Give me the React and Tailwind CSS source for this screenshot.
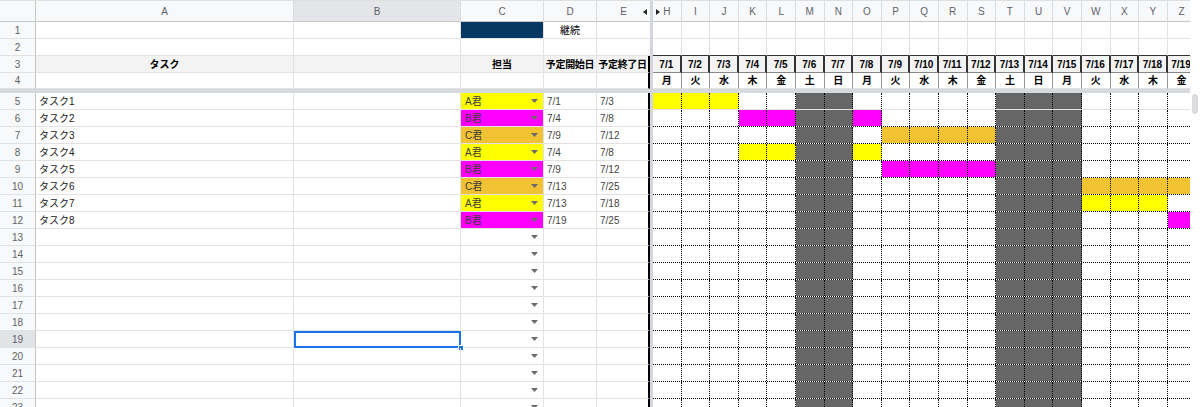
import React from 'react';

const DAYS = Array.from({ length: 19 }, (_, i) => i + 1);
const LETTERS = 'HIJKLMNOPQRSTUVWXYZ'.split('');
const DOW = ['月', '火', '水', '木', '金', '土', '日'];
const HOLIDAYS = [6, 7, 13, 14, 15];

const FILL = {
  A: 'bg-[#ffff00]',
  B: 'bg-[#ff00ff]',
  C: 'bg-[#f1c232]',
};

const tasks = [
  { name: 'タスク1', who: 'A', start: 1, end: 3 },
  { name: 'タスク2', who: 'B', start: 4, end: 8 },
  { name: 'タスク3', who: 'C', start: 9, end: 12 },
  { name: 'タスク4', who: 'A', start: 4, end: 8 },
  { name: 'タスク5', who: 'B', start: 9, end: 12 },
  { name: 'タスク6', who: 'C', start: 13, end: 25 },
  { name: 'タスク7', who: 'A', start: 13, end: 18 },
  { name: 'タスク8', who: 'B', start: 19, end: 25 },
];

const rowNumClass =
  'w-[36px] shrink-0 flex items-center justify-center border-r border-b border-r-[#c4c7c5] border-b-[#e2e2e2] text-[10px] text-[#5f6368]';
const cell = 'shrink-0 flex items-center border-r border-b border-[#e2e2e2]';

const Caret = () => (
  <svg width="7" height="4" viewBox="0 0 7 4" className="shrink-0">
    <path d="M0 0h7L3.5 4z" fill="#6b6b6b" />
  </svg>
);

const HeaderRow = () => (
  <div className="flex h-[21px] bg-[#f8f9fa] text-[10px] text-[#5f6368]">
    <div className="w-[36px] shrink-0 border-r border-b border-r-[#c4c7c5] border-b-[#c4c7c5]" />
    <div className="w-[258px] shrink-0 flex items-center justify-center border-r border-b border-r-[#dadce0] border-b-[#c4c7c5]">A</div>
    <div className="w-[167px] shrink-0 flex items-center justify-center border-r border-b border-r-[#dadce0] border-b-[#c4c7c5] bg-[#e3e5e8]">B</div>
    <div className="w-[83px] shrink-0 flex items-center justify-center border-r border-b border-r-[#dadce0] border-b-[#c4c7c5]">C</div>
    <div className="w-[53px] shrink-0 flex items-center justify-center border-r border-b border-r-[#dadce0] border-b-[#c4c7c5]">D</div>
    <div className="relative w-[53px] shrink-0 flex items-center justify-center border-b border-b-[#c4c7c5]">
      E
      <svg width="4" height="6" viewBox="0 0 4 6" className="absolute right-[3px] top-[8px]">
        <path d="M4 0v6L0 3z" fill="#222" />
      </svg>
    </div>
    <div className="w-[3px] shrink-0 bg-[#d3d6db]" />
    {LETTERS.map((l, i) => (
      <div
        key={l}
        className="relative w-[28.6px] shrink-0 flex items-center justify-center border-r border-b border-r-[#dadce0] border-b-[#c4c7c5]"
      >
        {i === 0 && (
          <svg width="4" height="6" viewBox="0 0 4 6" className="absolute left-[3px] top-[8px]">
            <path d="M0 0v6L4 3z" fill="#222" />
          </svg>
        )}
        {l}
      </div>
    ))}
  </div>
);

const TopRow = ({ num, height, children, gantt }) => (
  <div className={`flex ${height}`}>
    <div className={`${rowNumClass} bg-[#f8f9fa]`}>{num}</div>
    {children}
    <div className="w-[3px] shrink-0 bg-[#d3d6db]" />
    {DAYS.map((d) => gantt(d))}
  </div>
);

const DataRow = ({ row, task }) => {
  const selected = row === 19;
  return (
    <div className="flex h-[17px]">
      <div className={`${rowNumClass} ${selected ? 'bg-[#e1e3e6]' : 'bg-[#f8f9fa]'}`}>{row}</div>
      <div className={`${cell} w-[258px] px-[3px] text-[#222]`}>{task?.name}</div>
      <div className={`${cell} relative w-[167px]`}>
        {selected && (
          <>
            <div className="absolute left-0 top-0 right-[-1px] bottom-[-1px] border-2 border-[#1a73e8]" />
            <div className="absolute right-[-4px] bottom-[-4px] w-[6px] h-[6px] bg-[#1a73e8] border border-white" />
          </>
        )}
      </div>
      <div
        className={`${cell} w-[83px] justify-between pl-[4px] pr-[5px] text-[#3c3c3c] ${task ? FILL[task.who] : ''}`}
      >
        <span>{task ? `${task.who}君` : ''}</span>
        <Caret />
      </div>
      <div className={`${cell} w-[53px] px-[3px] text-[#444]`}>{task ? `7/${task.start}` : ''}</div>
      <div className="w-[53px] shrink-0 flex items-center px-[3px] border-r-2 border-b border-r-black border-b-[#e2e2e2] text-[#444]">
        {task ? `7/${task.end}` : ''}
      </div>
      <div className="w-[3px] shrink-0 bg-[#d3d6db]" />
      <div
        className={`flex shrink-0 border-b ${row === 5 ? 'border-[#e2e2e2]' : 'border-dotted border-black'}`}
      >
        {DAYS.map((d) => {
          const holiday = HOLIDAYS.includes(d);
          const on = task && d >= task.start && d <= task.end;
          const bg = holiday ? 'bg-[#666666]' : on ? FILL[task.who] : '';
          return <div key={d} className={`w-[28.6px] shrink-0 border-r border-dotted border-black ${bg}`} />;
        })}
      </div>
    </div>
  );
};

export default function App() {
  const rows = Array.from({ length: 19 }, (_, i) => i + 5);

  return (
    <div className="relative w-[1200px] h-[407px] overflow-hidden bg-white font-['Liberation_Sans','Noto_Sans_CJK_JP',sans-serif] text-[10px] text-[#222]">
      <div className="flex w-max flex-col border-t border-[#e0e0e0]">
        <HeaderRow />

        {/* row 1 */}
        <TopRow
          num={1}
          height="h-[17px]"
          gantt={(d) => <div key={d} className={`${cell} w-[28.6px]`} />}
        >
          <div className={`${cell} w-[258px]`} />
          <div className={`${cell} w-[167px]`} />
          <div className={`${cell} w-[83px] bg-[#073763]`} />
          <div className={`${cell} w-[53px] justify-center text-black`}>継続</div>
          <div className="w-[53px] shrink-0 border-b border-[#e2e2e2]" />
        </TopRow>

        {/* row 2 */}
        <TopRow
          num={2}
          height="h-[17px]"
          gantt={(d) => (
            <div key={d} className="w-[28.6px] shrink-0 border-r border-b border-r-[#e2e2e2] border-b-[#333]" />
          )}
        >
          <div className={`${cell} w-[258px]`} />
          <div className={`${cell} w-[167px]`} />
          <div className={`${cell} w-[83px]`} />
          <div className={`${cell} w-[53px]`} />
          <div className="w-[53px] shrink-0 border-b border-[#e2e2e2]" />
        </TopRow>

        {/* row 3: headings and dates */}
        <TopRow
          num={3}
          height="h-[17px]"
          gantt={(d) => (
            <div
              key={d}
              className="w-[28.6px] shrink-0 flex items-center justify-center bg-[#f3f3f3] border-r-2 border-b border-r-[#333] border-b-[#888] font-bold text-black"
            >
              7/{d}
            </div>
          )}
        >
          <div className={`${cell} w-[258px] justify-center bg-[#f3f3f3] font-bold text-black`}>タスク</div>
          <div className={`${cell} w-[167px] bg-[#f3f3f3]`} />
          <div className={`${cell} w-[83px] justify-center bg-[#f3f3f3] font-bold text-black`}>担当</div>
          <div className={`${cell} w-[53px] justify-center bg-[#f3f3f3] font-bold text-black tracking-[-0.3px]`}>予定開始日</div>
          <div className="w-[53px] shrink-0 flex items-center justify-center bg-[#f3f3f3] border-r-2 border-b border-r-black border-b-[#e2e2e2] font-bold text-black tracking-[-0.3px]">
            予定終了日
          </div>
        </TopRow>

        {/* row 4: day of week */}
        <TopRow
          num={4}
          height="h-[16px]"
          gantt={(d) => (
            <div
              key={d}
              className="w-[28.6px] shrink-0 flex items-center justify-center border-r border-b border-r-[#999] border-b-[#e2e2e2] font-bold text-black"
            >
              {DOW[(d - 1) % 7]}
            </div>
          )}
        >
          <div className={`${cell} w-[258px]`} />
          <div className={`${cell} w-[167px]`} />
          <div className={`${cell} w-[83px]`} />
          <div className={`${cell} w-[53px]`} />
          <div className="w-[53px] shrink-0 border-r-2 border-b border-r-black border-b-[#e2e2e2]" />
        </TopRow>

        {/* frozen rows divider */}
        <div className="h-[4px] bg-[#d6d9de]" />

        {rows.map((r) => (
          <DataRow key={r} row={r} task={tasks[r - 5]} />
        ))}
      </div>

      {/* vertical scrollbar */}
      <div className="absolute top-0 right-0 h-full w-[10px] bg-white">
        <div className="absolute top-[94px] right-[2px] h-[20px] w-[6px] rounded-full bg-[#dadce0]" />
      </div>
    </div>
  );
}
